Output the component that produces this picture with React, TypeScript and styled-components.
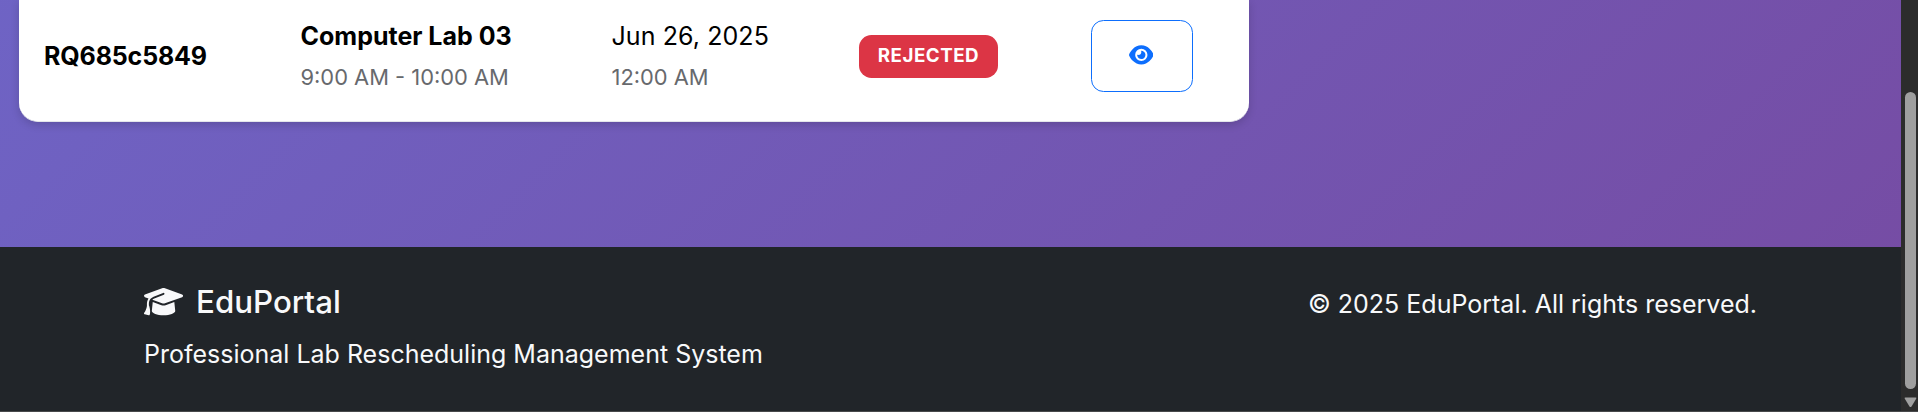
import React from "react";
import styled, { createGlobalStyle } from "styled-components";
import { FaEye, FaGraduationCap } from "react-icons/fa6";

const GlobalStyle = createGlobalStyle`
  * { box-sizing: border-box; }
  body {
    margin: 0;
    overflow: hidden;
    font-family: Inter, "Liberation Sans", sans-serif;
    font-size: 25px;
    line-height: 1.6;
    color: #000;
  }
`;

const Viewport = styled.div`
  display: flex;
  width: 1918px;
  height: 412px;
  border-bottom: 1px solid #48494b;
  background: #2c2c2c;
`;

const Page = styled.div`
  flex: 1;
  display: flex;
  flex-direction: column;
  background-image: linear-gradient(135deg, #667eea 0%, #764ba2 100%);
  background-size: 1901px 2950px;
  background-position: 0 100%;
`;

const Main = styled.main`
  height: 247px;
  padding-left: 19px;
`;

const RequestRow = styled.section`
  display: grid;
  grid-template-columns: 256.5px 311px 247.5px 232px 1fr;
  align-items: center;
  width: 1230px;
  height: 122px;
  padding: 0 25px 8px;
  background: #fff;
  border-bottom: 1px solid #e4e6ea;
  border-radius: 0 0 19px 19px;
  box-shadow: 0 3px 9px rgba(0, 0, 0, 0.16);
`;

const Cell = styled.div`
  display: flex;
  flex-direction: column;
  align-items: flex-start;
`;

const Title = styled.span<{ $weight?: number; $spacing?: number }>`
  font-weight: ${(p) => p.$weight ?? 400};
  letter-spacing: ${(p) => p.$spacing ?? 0}px;
  line-height: 41px;
`;

const Time = styled.span`
  font-size: 21.875px;
  line-height: 41px;
  color: #67696d;
`;

const StatusBadge = styled.span`
  height: 43px;
  padding: 0 18.75px;
  border-radius: 12.5px;
  background: #dc3545;
  color: #fff;
  font-size: 18.75px;
  font-weight: 700;
  line-height: 41px;
  letter-spacing: 0.5px;
`;

const ViewButton = styled.button`
  display: flex;
  align-items: center;
  justify-content: center;
  width: 102px;
  height: 72px;
  margin-bottom: 2px;
  padding: 0 2px 2px 0;
  border: 1px solid #0d6efd;
  border-radius: 12.5px;
  background: transparent;
  color: #0d6efd;
  font-size: 21.875px;

  svg { width: 1.125em; height: 1em; }
`;

const Footer = styled.footer`
  flex: 1;
  display: flex;
  justify-content: space-between;
  align-items: flex-start;
  padding: 37px 144px 0 144px;
  background: #212529;
  color: #f8f9fa;
`;

const Brand = styled.h5`
  display: flex;
  align-items: center;
  gap: 13px;
  height: 37px;
  margin: 0 0 13px;
  font-size: 31.25px;
  font-weight: 500;
  line-height: 37px;

  svg { width: 1.25em; height: 1em; margin-bottom: 2px; }
`;

const FooterText = styled.p`
  margin: 0;
  line-height: 40px;
`;

const Scrollbar = styled.div`
  display: flex;
  flex-direction: column;
  align-items: center;
  width: 17px;
  padding: 92px 0 0 1px;
`;

const Thumb = styled.div`
  width: 11px;
  height: 297px;
  margin-bottom: 8px;
  border-radius: 6px;
  background: #9f9f9f;
`;

export default function App() {
  return (
    <>
      <GlobalStyle />
      <Viewport>
        <Page>
          <Main>
            <RequestRow>
              <Cell><Title $weight={700} $spacing={-0.15}>RQ685c5849</Title></Cell>
              <Cell>
                <Title $weight={700}>Computer Lab 03</Title>
                <Time>9:00 AM - 10:00 AM</Time>
              </Cell>
              <Cell>
                <Title $spacing={0.08}>Jun 26, 2025</Title>
                <Time>12:00 AM</Time>
              </Cell>
              <Cell><StatusBadge>REJECTED</StatusBadge></Cell>
              <Cell>
                <ViewButton aria-label="View request"><FaEye /></ViewButton>
              </Cell>
            </RequestRow>
          </Main>
          <Footer>
            <div>
              <Brand><FaGraduationCap />EduPortal</Brand>
              <FooterText>Professional Lab Rescheduling Management System</FooterText>
            </div>
            <FooterText>© 2025 EduPortal. All rights reserved.</FooterText>
          </Footer>
        </Page>
        <Scrollbar>
          <Thumb />
          <svg width="13" height="11" viewBox="0 0 13 11">
            <path d="M1.4 0.5h10.2q1.2 0 .6 1.2L7.5 9.4q-1 1.2-2 0L.8 1.7Q.2.5 1.4.5z" fill="#9f9f9f" />
          </svg>
        </Scrollbar>
      </Viewport>
    </>
  );
}
